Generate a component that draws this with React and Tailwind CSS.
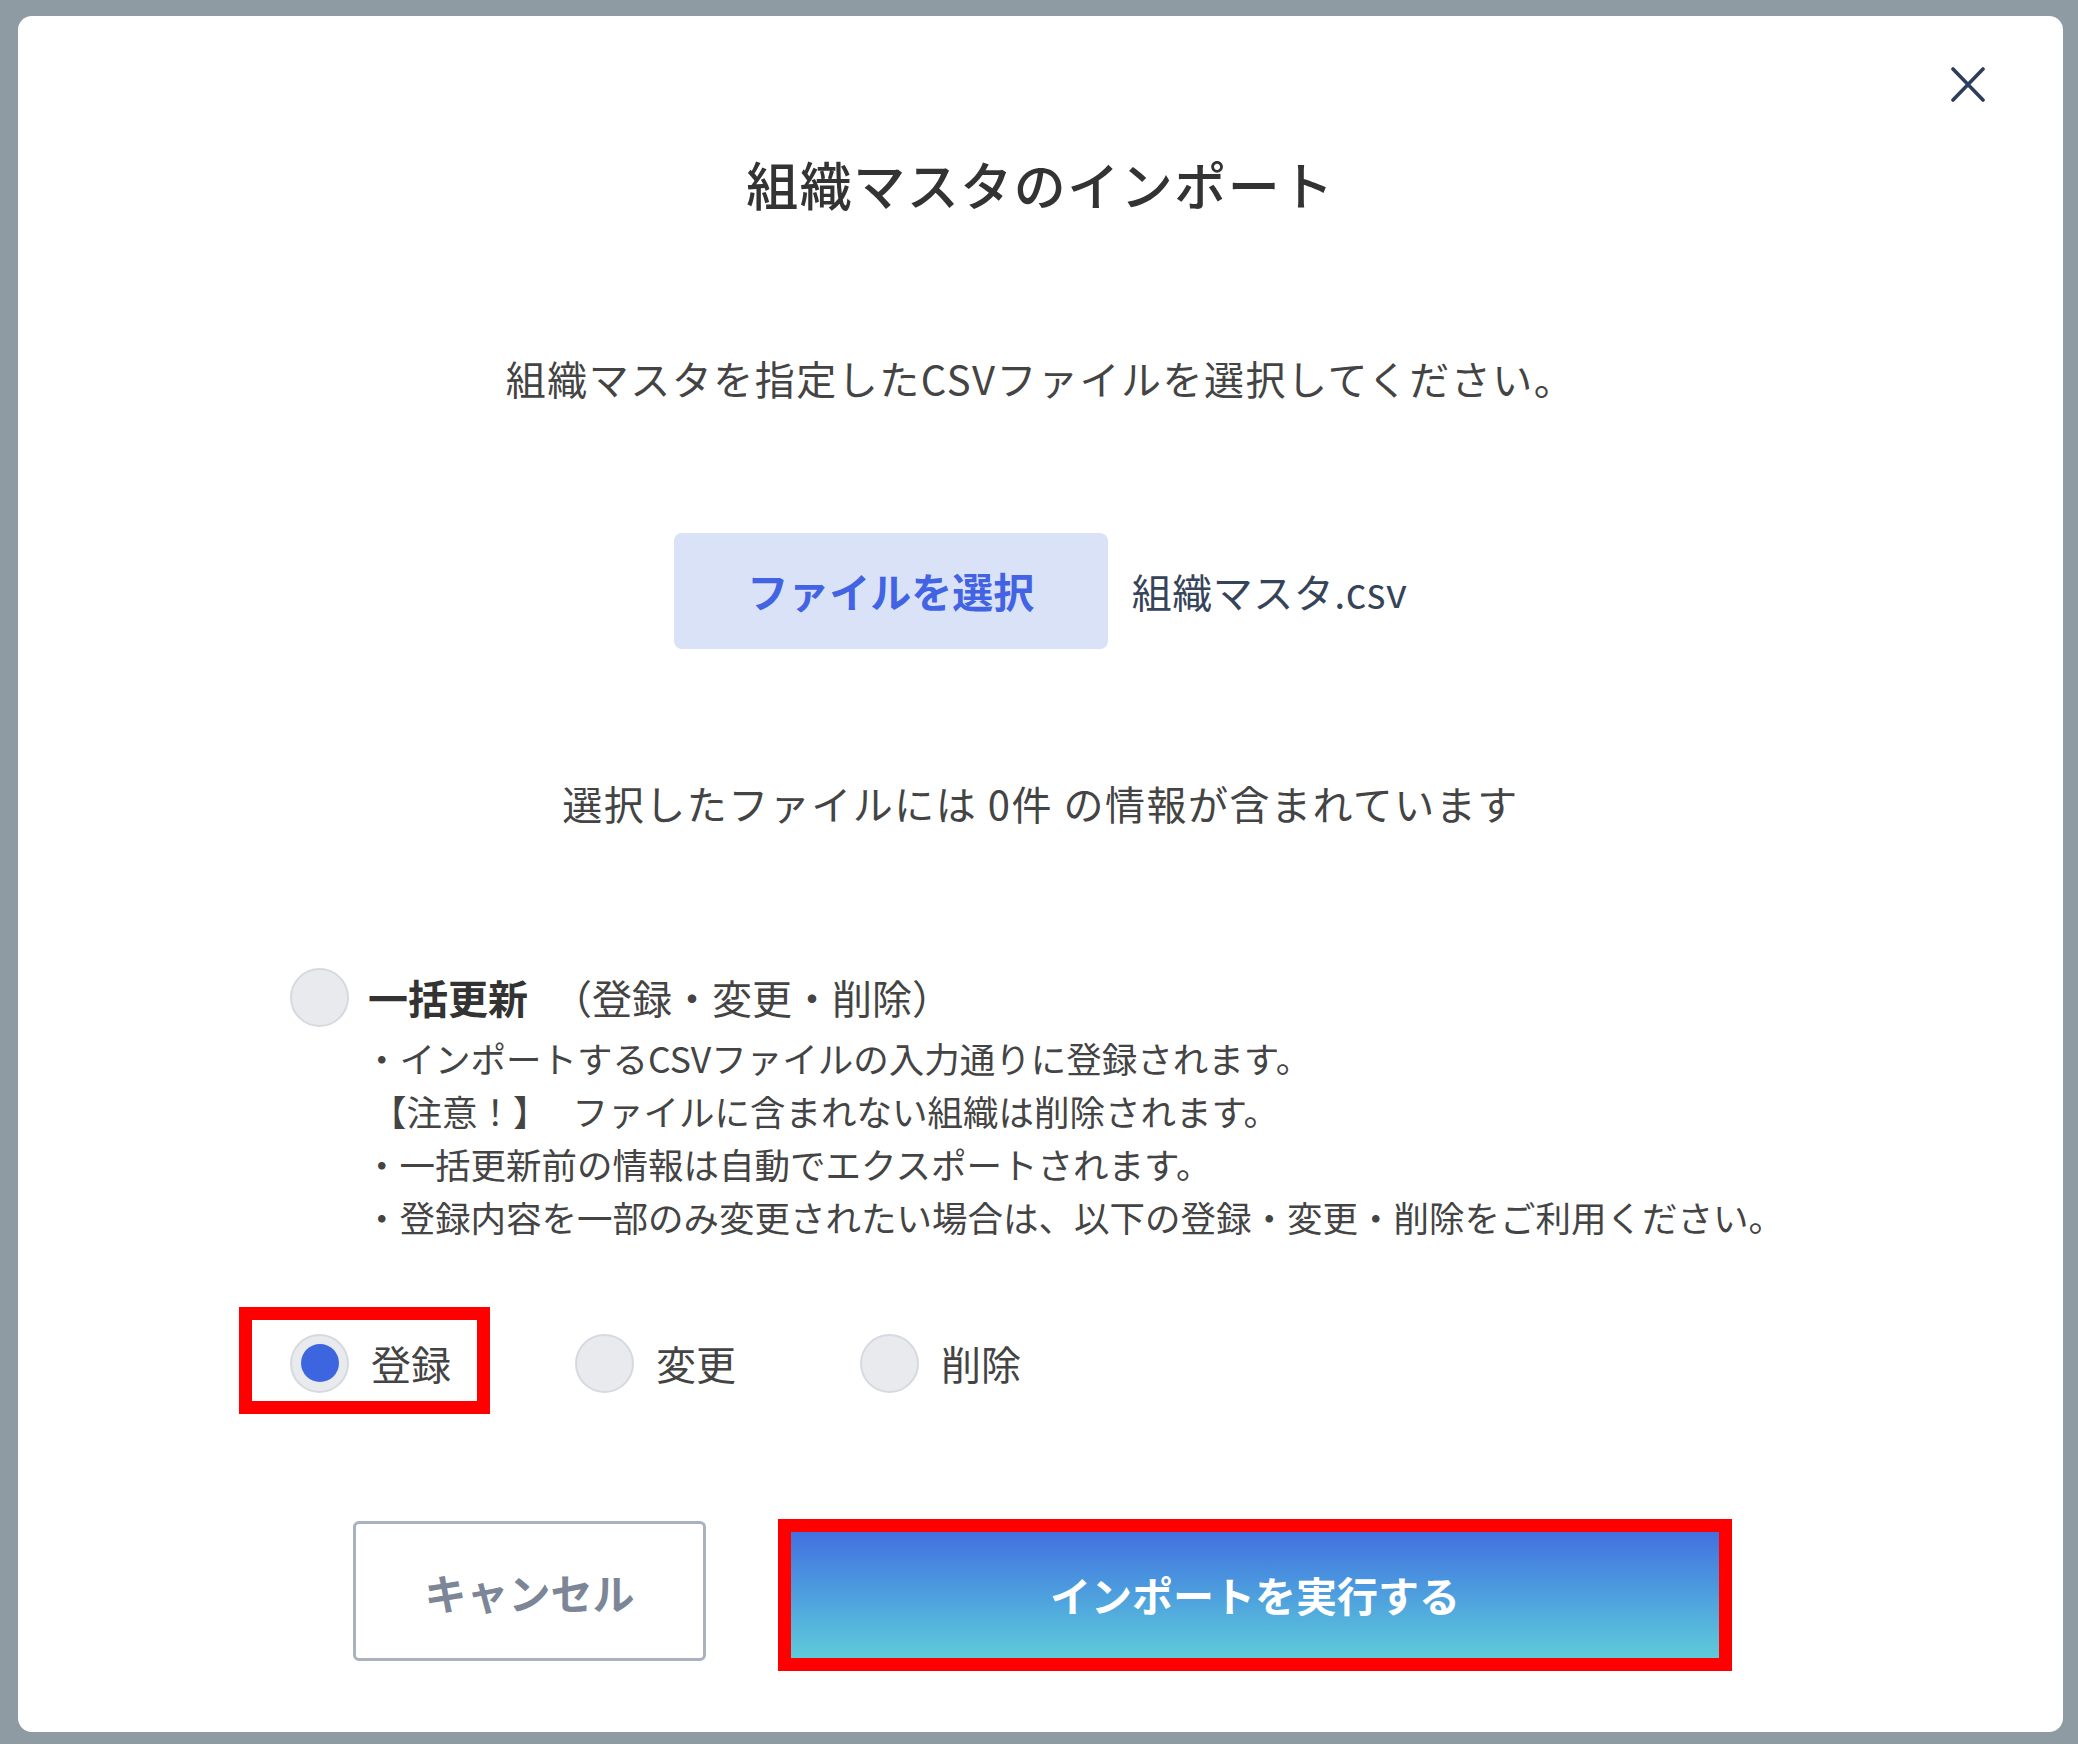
import React from "react";

const font = { fontFamily: '"Noto Sans CJK JP", "Noto Sans", sans-serif' };

function Radio({ checked }) {
  return (
    <div className="w-[59px] h-[59px] rounded-full bg-[#e8eaee] border-2 border-[#d6d9df] flex items-center justify-center shrink-0">
      {checked && <div className="w-[38px] h-[38px] rounded-full bg-[#3e65e0]" />}
    </div>
  );
}

export default function App() {
  return (
    <div
      className="w-[2078px] h-[1744px] bg-[#8f9ba3] flex pt-[16px] pl-[18px] pr-[15px] pb-[12px]"
      style={font}
    >
      <div className="relative flex-1 bg-white rounded-[14px] flex flex-col items-center text-[#444]">
        <button className="absolute right-[78px] top-[51px] w-[34px] h-[35px]">
          <svg viewBox="0 0 34 35" className="w-[34px] h-[35px]">
            <path d="M2 2 L32 33 M32 2 L2 33" stroke="#2c3e5a" strokeWidth="3.6" strokeLinecap="round" fill="none" />
          </svg>
        </button>

        <h1 className="mt-[136px] text-[52px] leading-[64px] font-medium tracking-[1.5px] text-[#333]">
          組織マスタのインポート
        </h1>

        <p className="mt-[134px] text-[40px] leading-[56px] tracking-[1.5px] text-[#444]">
          組織マスタを指定したCSVファイルを選択してください。
        </p>

        <div className="mt-[127px] flex items-center">
          <div className="w-[434px] h-[116px] rounded-[8px] bg-[#dae2f8] flex items-center justify-center text-[41px] font-bold text-[#4263e3]">
            ファイルを選択
          </div>
          <span className="ml-[24px] text-[40px] tracking-[0.5px] text-[#36445a]">組織マスタ.csv</span>
        </div>

        <p className="mt-[126px] text-[40px] leading-[56px] tracking-[1.5px] text-[#444]">
          選択したファイルには 0件 の情報が含まれています
        </p>

        <div className="self-start ml-[272px] mt-[136px] flex flex-col">
          <div className="flex items-center h-[60px]">
            <Radio />
            <span className="ml-[19px] text-[40px] text-[#333]">
              <span className="font-bold">一括更新</span>
              <span className="ml-[24px] text-[#444]">（登録・変更・削除）</span>
            </span>
          </div>
          <div className="mt-[4px] ml-[74px] text-[35.5px] leading-[53px] text-[#444]">
            <div>・インポートするCSVファイルの入力通りに登録されます。</div>
            <div className="pl-[7px]">
              【注意！】<span className="ml-[24px]">ファイルに含まれない組織は削除されます。</span>
            </div>
            <div>・一括更新前の情報は自動でエクスポートされます。</div>
            <div>・登録内容を一部のみ変更されたい場合は、以下の登録・変更・削除をご利用ください。</div>
          </div>

          <div className="mt-[90px] flex items-center h-[60px] gap-[124px]">
            <div className="relative flex items-center">
              <Radio checked />
              <span className="ml-[22px] text-[40px] text-[#444]">登録</span>
              <div className="absolute left-[-51px] top-[-26px] w-[251px] h-[107px] border-[13px] border-[#ff0000] pointer-events-none" />
            </div>
            <div className="flex items-center">
              <Radio />
              <span className="ml-[22px] text-[40px] text-[#444]">変更</span>
            </div>
            <div className="flex items-center">
              <Radio />
              <span className="ml-[22px] text-[40px] text-[#444]">削除</span>
            </div>
          </div>
        </div>

        <div className="mt-[126px] flex items-start gap-[72px] pl-[4px]">
          <button className="mt-[2px] w-[353px] h-[140px] rounded-[6px] border-[3px] border-[#aab2be] bg-white text-[42px] font-bold text-[#7c8696]">
            キャンセル
          </button>
          <div className="w-[954px] h-[152px] border-[13px] border-[#ff0000] bg-linear-to-b from-[#4370df] to-[#5fcbd9] flex items-center justify-center text-[41px] font-bold text-white">
            インポートを実行する
          </div>
        </div>
      </div>
    </div>
  );
}
